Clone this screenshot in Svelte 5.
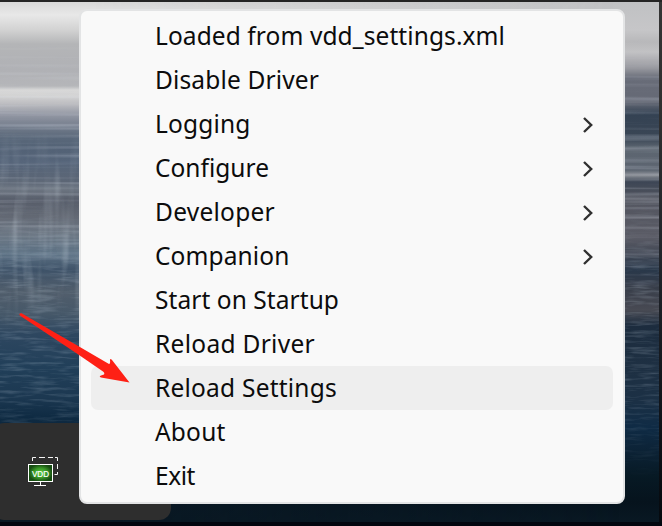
<script>
  // width: drawn length of the label in pixels
  const items = [
    { label: 'Loaded from vdd_settings.xml', width: 350 },
    { label: 'Disable Driver', width: 164 },
    { label: 'Logging', width: 95.5, submenu: true },
    { label: 'Configure', width: 114, submenu: true },
    { label: 'Developer', width: 120, submenu: true },
    { label: 'Companion', width: 134.5, submenu: true },
    { label: 'Start on Startup', width: 184 },
    { label: 'Reload Driver', width: 160 },
    { label: 'Reload Settings', width: 182, active: true },
    { label: 'About', width: 70.5 },
    { label: 'Exit', width: 40 }
  ];

  // Spreads the letters so that a label takes up its given width.
  function fit(node, width) {
    const natural = node.getBoundingClientRect().width;
    node.style.letterSpacing = `${(width - natural) / node.textContent.length}px`;
  }
</script>

<div class="desktop">
  <div class="wallpaper">
    <div class="left"></div>
    <div class="right"></div>
  </div>
  <svg class="ripples" width="659" height="526" viewBox="0 0 659 526">
    <defs>
      <filter id="streaks" x="0" y="0" width="100%" height="100%">
        <feTurbulence type="fractalNoise" baseFrequency="0.004 0.25" numOctaves="2" seed="7" />
        <feColorMatrix values="0 0 0 0 0.85  0 0 0 0 0.9  0 0 0 0 1  2.4 0 0 0 -1.1" />
      </filter>
      <filter id="water" x="0" y="0" width="100%" height="100%">
        <feTurbulence type="fractalNoise" baseFrequency="0.035 0.32" numOctaves="3" seed="3" />
        <feColorMatrix values="0 0 0 0 0.6  0 0 0 0 0.7  0 0 0 0 0.8  2.4 0 0 0 -1.1" />
      </filter>
      <filter id="columns" x="0" y="0" width="100%" height="100%">
        <feTurbulence type="fractalNoise" baseFrequency="0.1 0.012" numOctaves="2" seed="11" />
        <feColorMatrix values="0 0 0 0 0.7  0 0 0 0 0.78  0 0 0 0 0.85  2.4 0 0 0 -1.1" />
      </filter>
      <linearGradient id="fade" x2="0" y2="1">
        <stop offset="0" stop-color="#000" />
        <stop offset="0.3" stop-color="#fff" />
        <stop offset="0.7" stop-color="#fff" />
        <stop offset="1" stop-color="#000" />
      </linearGradient>
      <mask id="band"><rect y="35" width="659" height="270" fill="url(#fade)" /></mask>
      <mask id="pillars"><rect y="130" width="659" height="200" fill="url(#fade)" /></mask>
      <mask id="lake"><rect y="190" width="659" height="290" fill="url(#fade)" /></mask>
    </defs>
    <g mask="url(#band)"><rect y="35" width="659" height="270" filter="url(#streaks)" opacity="0.25" /></g>
    <g mask="url(#pillars)"><rect y="130" width="80" height="200" filter="url(#columns)" opacity="0.28" /></g>
    <g mask="url(#lake)"><rect y="190" width="659" height="290" filter="url(#water)" opacity="0.22" /></g>
  </svg>

  <div class="tray">
    <svg width="34" height="32" viewBox="27 456 34 32">
      <defs>
        <radialGradient id="screen">
          <stop offset="0" stop-color="#5fce45" />
          <stop offset="0.55" stop-color="#3b9a28" />
          <stop offset="1" stop-color="#174d12" />
        </radialGradient>
      </defs>
      <path d="M32.5 461V457.5H36M39 457.5h6M48 457.5h5M55 457.5h2.5V461M57.5 464v5M57.5 472v2.5H54.5" fill="none" stroke="#f4f4f4" />
      <rect x="28.5" y="464.5" width="24" height="17" fill="url(#screen)" stroke="#fff" />
      <text x="40.5" y="477" text-anchor="middle" textLength="17" lengthAdjust="spacingAndGlyphs">VDD</text>
      <path d="M40.5 482v3M34 485.5h12" stroke="#fff" />
    </svg>
  </div>

  <div class="menu">
    {#each items as item}
      <div class="item" class:active={item.active}>
        <span use:fit={item.width}>{item.label}</span>
        {#if item.submenu}
          <svg class="chevron" width="12" height="18" viewBox="0 0 12 18">
            <path d="M2 2l7.2 7L2 16" fill="none" stroke="#303030" stroke-width="2.4" />
          </svg>
        {/if}
      </div>
    {/each}
  </div>

  <svg class="arrow" width="112" height="74" viewBox="19 312 112 74">
    <path d="M21.5 313.3L79 346.5L109 364Q110.500 364 110 360.5Q110 358 112 360L129.5 382.5Q115 380 101 377.5Q98.5 376.5 101 375.5L104 374.5Q105 373 103 371.5L79 355L19.8 315.5Q18.5 313 21.5 313.3Z" fill="#fe2015" />
  </svg>
</div>

<style>
  :global(body) {
    margin: 0;
  }
  .desktop {
    position: relative;
    width: 662px;
    height: 526px;
    overflow: hidden;
    background: #02060f;
    font-family: 'Noto Sans', 'Open Sans', sans-serif;
  }
  .wallpaper {
    display: grid;
    box-sizing: border-box;
    height: 522px;
    padding-right: 3px;
    border-top: 2px solid #242424;
    background: linear-gradient(#343434, #303030 20%, #20242a 50%, #05090e);
  }
  .left,
  .right {
    grid-area: 1 / 1;
  }
  .left {
    z-index: 1;
    mask-image: linear-gradient(to right, #000 80px, transparent 620px);
    background: linear-gradient(
      #d8d8d8 0, #e8e8e8 13px, #d2d2d2 28px, #b4b5b7 42px, #b0b1b5 68px, #b5b6b9 84px,
      #d8d8d8 88px, #d2d2d2 94px, #bcbcc0 102px, #9599a5 112px, #747d8c 124px, #596779 136px,
      #536276 148px, #56657a 160px, #5c6675 180px, #6f7884 186px, #565c69 198px, #626873 214px,
      #6b7683 232px, #5b7083 252px, #3e5268 268px, #505d6b 290px, #465869 312px, #2e4760 332px,
      #213f59 365px, #1c3851 395px, #0e2a42 416px, #0a1a26 480px, #091823 520px
    );
  }
  .right {
    background: linear-gradient(
      #c0c1c3 0, #c6c6c8 28px, #b8b8ba 40px, #c2c2c4 50px, #999aa0 66px, #686c78 76px,
      #656975 100px, #344253 112px, #3a4655 136px, #5d6671 146px, #5c6470 168px, #8b8f96 173px,
      #3d4655 180px, #51545e 196px, #5b5c66 235px, #404653 252px, #29384a 268px, #363c48 285px,
      #484a53 308px, #1c2c3e 324px, #1e3043 365px, #1b3045 400px, #0f2b45 425px, #0c2235 450px,
      #071924 475px, #06131d 500px, #091823 520px
    );
  }
  .ripples {
    position: absolute;
    z-index: 1;
    left: 0;
    top: 0;
  }
  .tray {
    position: absolute;
    z-index: 1;
    left: -8px;
    top: 423px;
    box-sizing: border-box;
    width: 179px;
    height: 97px;
    padding: 33px 35px;
    border-radius: 12px;
    background: #2e2e2e;
  }
  .tray svg {
    display: block;
  }
  .tray text {
    font: 400 9px 'Liberation Sans', sans-serif;
    fill: #fff;
    stroke: #fff;
    stroke-width: 0.2px;
  }
  .menu {
    position: absolute;
    z-index: 2;
    left: 79px;
    top: 9px;
    box-sizing: border-box;
    width: 546px;
    height: 495px;
    padding: 3px 10px;
    border: 2px solid #e3e4e5;
    border-radius: 8px;
    background: #f9f9f9;
  }
  .item {
    display: flex;
    align-items: center;
    justify-content: space-between;
    box-sizing: border-box;
    height: 44px;
    padding: 0 19px 0 64px;
    border-radius: 7px;
    color: #0c0c0c;
    font-size: 24.5px;
    line-height: 44px;
    white-space: pre;
  }
  .item span {
    flex: none;
  }
  .active {
    background: #eeeeee;
  }
  .chevron {
    margin-top: 2px;
  }
  .arrow {
    position: absolute;
    z-index: 3;
    left: 19px;
    top: 312px;
  }
</style>
